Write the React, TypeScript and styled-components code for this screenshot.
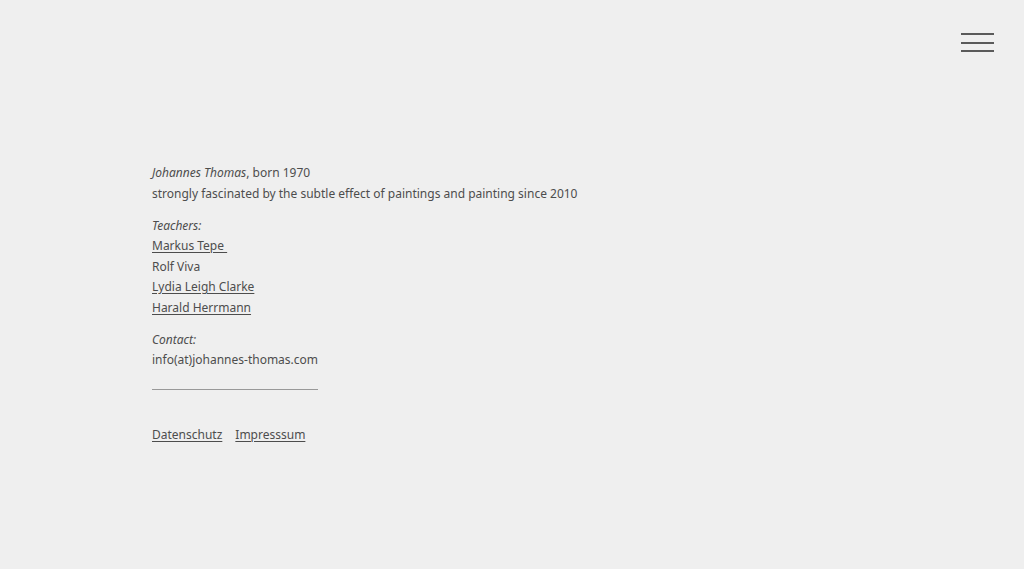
import React from 'react'
import styled, { createGlobalStyle } from 'styled-components';

const GlobalStyle = createGlobalStyle`
    html, body {
        margin: 0;
        padding: 0;
        background: #efefef;
    }
    body {
        font-family: "Noto Sans", "Open Sans", sans-serif;
        color: #4d4d4d;
        font-size: 12px;
        line-height: 20.5px;
    }
`;

const Page = styled.div`
    position: relative;
    min-height: 569px;
    padding: 163px 0 0 152px;
    box-sizing: border-box;
`;

const MenuButton = styled.button`
    position: absolute;
    top: 33px;
    right: 30px;
    width: 33px;
    height: 19px;
    padding: 0;
    border: none;
    background: none;
    display: flex;
    flex-direction: column;
    justify-content: space-between;
    cursor: pointer;

    span {
        display: block;
        height: 2px;
        background: #5a5a5a;
    }
`;

const Paragraph = styled.p`
    margin: 0 0 11.5px;
`;

const Line = styled.span`
    display: block;
`;

const Em = styled.em`
    font-style: italic;
`;

const Link = styled.a`
    color: #4d4d4d;
    text-decoration: underline;
    text-underline-offset: 2px;
    text-decoration-thickness: 1px;
`;

const Divider = styled.hr`
    width: 166px;
    margin: 18px 0 0;
    border: none;
    border-top: 1px solid #999;
`;

const Footer = styled.nav`
    display: flex;
    gap: 13px;
    margin-top: 35px;
`;

export default function App() {
    return (
        <Page>
            <GlobalStyle />
            <MenuButton aria-label="Menu">
                <span />
                <span />
                <span />
            </MenuButton>

            <Paragraph>
                <Line><Em>Johannes Thomas</Em>, born 1970</Line>
                <Line>strongly fascinated by the subtle effect of paintings and painting since 2010</Line>
            </Paragraph>

            <Paragraph>
                <Line><Em>Teachers:</Em></Line>
                <Line><Link href="#">Markus Tepe&nbsp;</Link></Line>
                <Line>Rolf Viva</Line>
                <Line><Link href="#">Lydia Leigh Clarke</Link></Line>
                <Line><Link href="#">Harald Herrmann</Link></Line>
            </Paragraph>

            <Paragraph>
                <Line><Em>Contact:</Em></Line>
                <Line>info(at)johannes-thomas.com</Line>
            </Paragraph>

            <Divider />

            <Footer>
                <Link href="#">Datenschutz</Link>
                <Link href="#">Impresssum</Link>
            </Footer>
        </Page>
    )
}
